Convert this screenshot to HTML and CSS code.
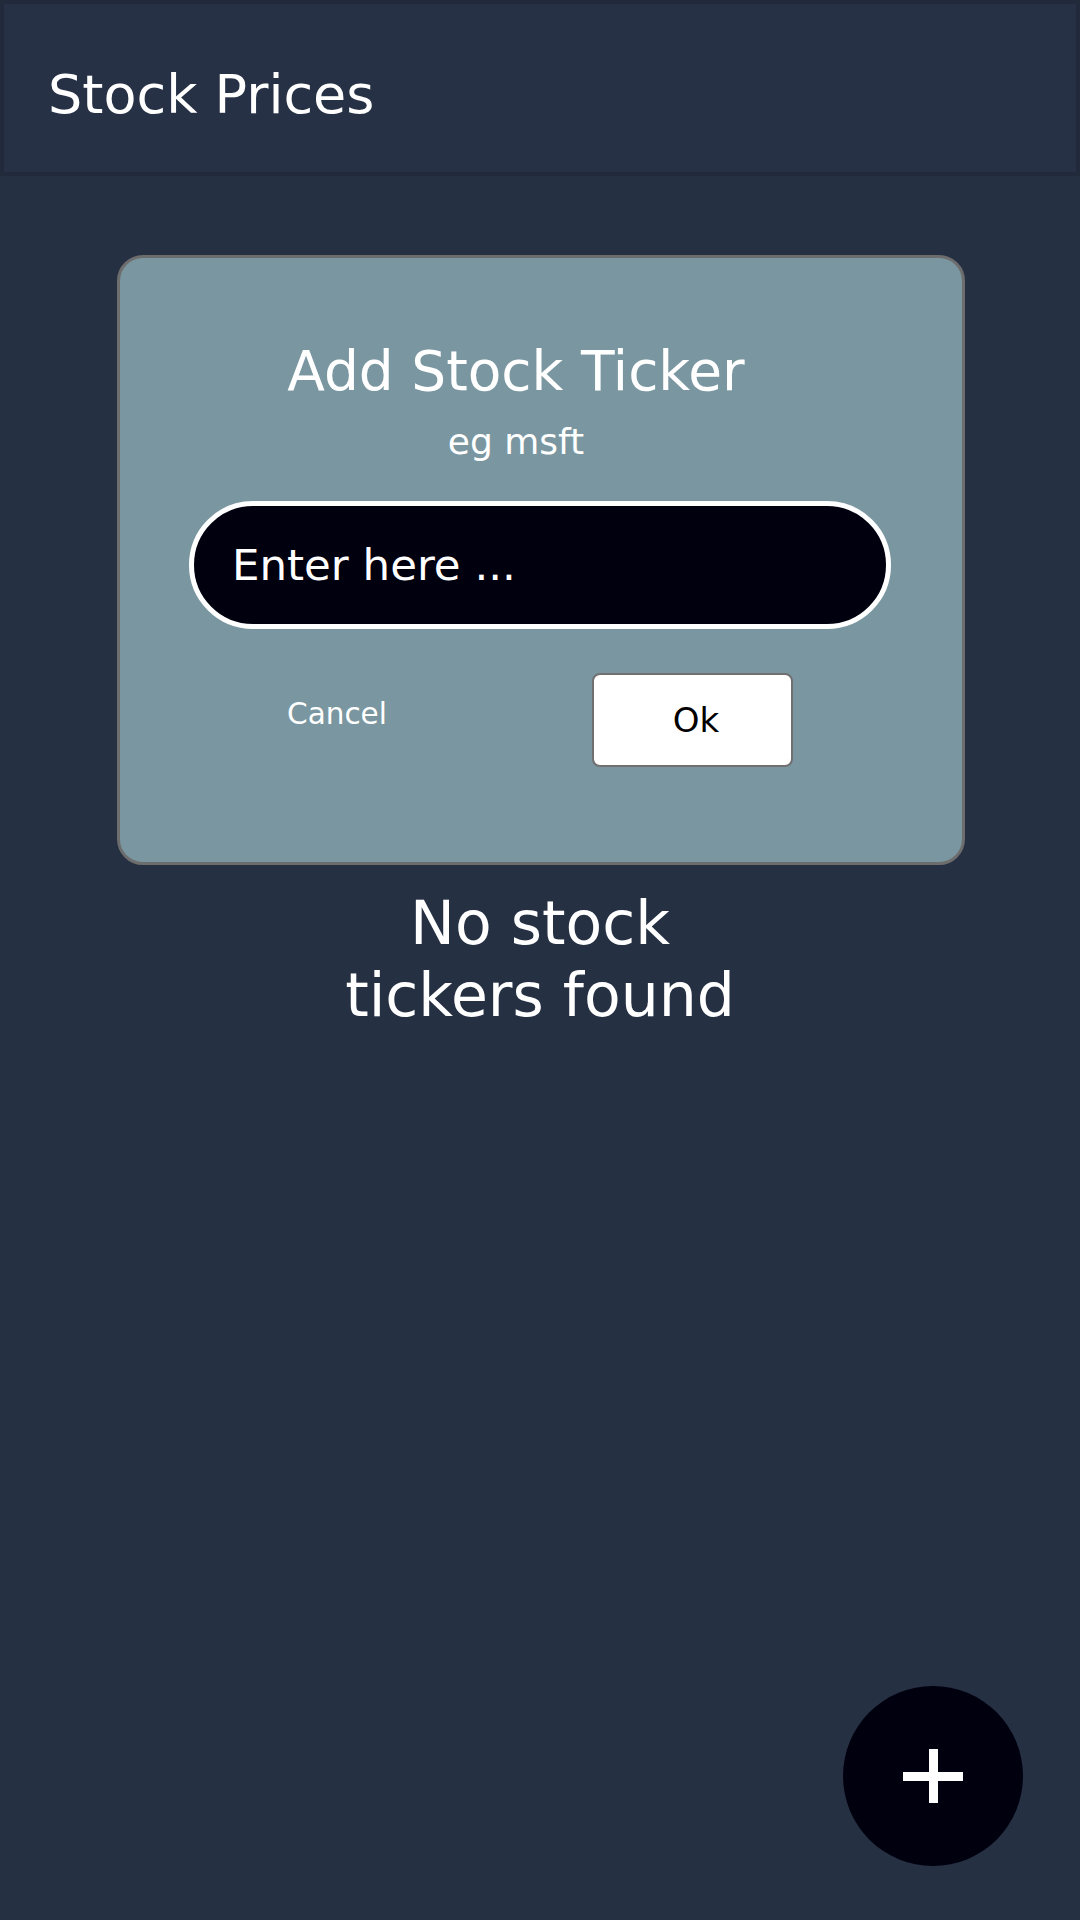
FILE: index.html
```html
<!DOCTYPE html>
<html lang="en">
<head>
<meta charset="utf-8">
<title>Stock Prices</title>
<link rel="stylesheet" href="styles.css">
</head>
<body>
<header class="app-bar">
  <h1 class="app-title">Stock Prices</h1>
</header>
<main class="content">
  <section class="dialog">
    <h2 class="dialog-title">Add Stock Ticker</h2>
    <p class="dialog-hint">eg msft</p>
    <input class="ticker-input" type="text" placeholder="Enter here ...">
    <div class="dialog-actions">
      <button class="btn-cancel" type="button">Cancel</button>
      <button class="btn-ok" type="button">Ok</button>
    </div>
  </section>
  <p class="empty-msg">No stock tickers found</p>
</main>
<button class="fab" type="button" aria-label="Add">
  <svg width="60" height="54" viewBox="0 0 60 54">
    <rect x="0" y="23" width="60" height="9" fill="#ffffff"/>
    <rect x="26" y="0" width="9" height="54" fill="#ffffff"/>
  </svg>
</button>
</body>
</html>
```

FILE: styles.css
```css
* { box-sizing: border-box; }

html, body {
  margin: 0;
  padding: 0;
}

body {
  background: #263043;
  font-family: "DejaVu Sans", "Noto Sans", sans-serif;
  color: #ffffff;
  width: 1080px;
  height: 1920px;
  overflow: hidden;
}

.app-bar {
  height: 176px;
  background: #263145;
  border: 4px solid #212a3a;
  padding: 58px 0 0 44px;
}

.app-title {
  margin: 0;
  font-weight: normal;
  font-size: 54px;
  line-height: 66px;
  color: #ffffff;
}

.content {
  display: flex;
  flex-direction: column;
  align-items: center;
}

.dialog {
  margin: 79px 0 0 2px;
  width: 848px;
  background: #7a97a1;
  border: 3px solid #6d6d6d;
  border-radius: 26px;
  padding: 81px 0 95px 0;
  display: flex;
  flex-direction: column;
}

.dialog-title {
  margin: 0;
  font-weight: normal;
  font-size: 55px;
  line-height: 64px;
  text-align: center;
  padding-right: 50px;
}

.dialog-hint {
  margin: 19px 0 0 0;
  font-size: 36px;
  line-height: 40px;
  text-align: center;
  padding-right: 50px;
}

.ticker-input {
  margin: 39px 0 0 69px;
  width: 702px;
  height: 128px;
  border: 5px solid #ffffff;
  border-radius: 64px;
  background: #01000f;
  color: #ffffff;
  font-family: "DejaVu Sans", "Noto Sans", sans-serif;
  font-size: 43.5px;
  padding: 0 0 0 38px;
  outline: none;
}

.ticker-input::placeholder {
  color: #ffffff;
  opacity: 1;
}

.dialog-actions {
  margin: 44px 0 0 39px;
  display: grid;
  grid-template-columns: 356px 354px;
  align-items: start;
}

.btn-cancel {
  justify-self: center;
  margin-top: 24px;
  background: none;
  border: none;
  padding: 0;
  color: #ffffff;
  font-family: "DejaVu Sans", "Noto Sans", sans-serif;
  font-size: 29.5px;
  line-height: 34px;
}

.btn-ok {
  justify-self: center;
  width: 201px;
  height: 94px;
  background: #ffffff;
  border: 2.5px solid #707070;
  border-radius: 8px;
  color: #000000;
  font-family: "DejaVu Sans", "Noto Sans", sans-serif;
  font-size: 34px;
  padding: 0 0 0 8px;
}

.empty-msg {
  margin: 22px 0 0 0;
  max-width: 440px;
  font-size: 60px;
  line-height: 72px;
  text-align: center;
}

.fab {
  position: fixed;
  right: 57px;
  bottom: 54px;
  width: 180px;
  height: 180px;
  border-radius: 50%;
  background: #01000f;
  border: none;
  padding: 0;
  display: flex;
  align-items: center;
  justify-content: center;
}

.fab svg { display: block; }
```
